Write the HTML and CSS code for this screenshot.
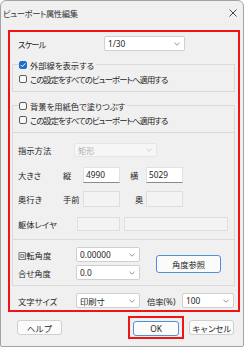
FILE: index.html
```
<!DOCTYPE html>
<html lang="ja">
<head>
    <meta charset="UTF-8">
    <title>ビューポート属性編集</title>
    <link rel="stylesheet" href="styles.css">
</head>
<body>
    <div class="window">
        <div class="titlebar">
            <span class="title">ビューポート属性編集</span>
            <svg class="close" width="8" height="8" viewBox="0 0 8 8"><path d="M0.5 0.5L7.5 7.5M7.5 0.5L0.5 7.5" stroke="#333" stroke-width="0.9"/></svg>
        </div>

        <div class="main">
            <div class="row scale-row">
                <span class="lbl w-scale tight">スケール</span>
                <div class="combo c-scale">1/30<svg class="chev" width="6" height="4" viewBox="0 0 6 4"><path d="M0.5 0.8L3 3.2L5.5 0.8" fill="none" stroke="#777" stroke-width="0.8"/></svg></div>
            </div>

            <div class="group">
                <div class="legend"><span class="box checked"><svg width="8" height="8" viewBox="0 0 8 8"><path d="M1.8 4.1L3.3 5.6L6.3 2.4" fill="none" stroke="#fff" stroke-width="1"/></svg></span>外部線を表示する</div>
                <div class="check tight"><span class="box"></span>この設定をすべてのビューポートへ適用する</div>
            </div>

            <div class="group">
                <div class="legend"><span class="box"></span>背景を用紙色で塗りつぶす</div>
                <div class="check tight"><span class="box"></span>この設定をすべてのビューポートへ適用する</div>
            </div>

            <div class="panel p-shape">
                <div class="row r-kind">
                    <span class="lbl w-kind">指示方法</span>
                    <div class="combo disabled c-kind">矩形<svg class="chev" width="6" height="4" viewBox="0 0 6 4"><path d="M0.5 0.8L3 3.2L5.5 0.8" fill="none" stroke="#c4c4c4" stroke-width="0.8"/></svg></div>
                </div>
                <div class="row r-size">
                    <span class="lbl w-main">大きさ</span>
                    <span class="lbl w-sub">縦</span>
                    <div class="edit">4990</div>
                    <span class="lbl w-sub2">横</span>
                    <div class="edit">5029</div>
                </div>
                <div class="row r-depth">
                    <span class="lbl w-main">奥行き</span>
                    <span class="lbl w-sub">手前</span>
                    <div class="edit off"></div>
                    <span class="lbl w-sub2 back">奥</span>
                    <div class="edit off"></div>
                </div>
                <div class="row r-layer">
                    <span class="lbl w-layer">躯体レイヤ</span>
                    <div class="edit off l1"></div>
                    <div class="edit off l2"></div>
                </div>
            </div>

            <div class="panel p-angle">
                <div class="angles">
                    <div class="row r-angle">
                        <span class="lbl w-angle">回転角度</span>
                        <div class="combo c-angle">0.00000<svg class="chev" width="6" height="4" viewBox="0 0 6 4"><path d="M0.5 0.8L3 3.2L5.5 0.8" fill="none" stroke="#777" stroke-width="0.8"/></svg></div>
                    </div>
                    <div class="row r-angle r-angle2">
                        <span class="lbl w-angle">合せ角度</span>
                        <div class="combo c-angle">0.0<svg class="chev" width="6" height="4" viewBox="0 0 6 4"><path d="M0.5 0.8L3 3.2L5.5 0.8" fill="none" stroke="#777" stroke-width="0.8"/></svg></div>
                    </div>
                </div>
                <button class="btn primary b-ref">角度参照</button>
            </div>

            <div class="row r-font">
                <span class="lbl w-angle">文字サイズ</span>
                <div class="combo c-angle">印刷寸<svg class="chev" width="6" height="4" viewBox="0 0 6 4"><path d="M0.5 0.8L3 3.2L5.5 0.8" fill="none" stroke="#777" stroke-width="0.8"/></svg></div>
                <span class="lbl w-rate">倍率(%)</span>
                <div class="combo c-rate">100<svg class="chev" width="6" height="4" viewBox="0 0 6 4"><path d="M0.5 0.8L3 3.2L5.5 0.8" fill="none" stroke="#777" stroke-width="0.8"/></svg></div>
            </div>
        </div>

        <div class="buttons">
            <button class="btn">ヘルプ</button>
            <div class="spacer"></div>
            <div class="ok-mark"><button class="btn primary">OK</button></div>
            <button class="btn tight-btn">キャンセル</button>
        </div>
    </div>
</body>
</html>
```

FILE: styles.css
```
* {
    box-sizing: border-box;
}
body {
    margin: 0;
    background: #fff;
    font-family: "Noto Sans", "Noto Sans CJK JP", sans-serif;
    font-size: 8.3px;
    font-feature-settings: "palt";
    color: #262626;
}
.window {
    width: 244px;
    height: 347px;
    background: #f0f0f0;
    border: 1px solid #a3a3a3;
    border-radius: 6px 6px 2px 2px;
    display: flex;
    flex-direction: column;
}
.titlebar {
    height: 29px;
    display: flex;
    align-items: center;
    justify-content: space-between;
    padding: 0 6px 5px 2px;
}
.title {
    color: #333;
    letter-spacing: -0.4px;
}
.close {
    display: block;
}

/* kana-heavy texts run narrower in the original UI font */
.tight {
    letter-spacing: -0.9px;
}

/* red annotated area */
.main {
    margin: 0 3px 0 7px;
    border: 2px solid #f01414;
    padding: 4px 0 2px;
}
.row {
    display: flex;
    align-items: center;
}
.lbl {
    flex: none;
    white-space: nowrap;
}
.scale-row {
    height: 15px;
    padding-left: 8px;
}
.w-scale { width: 86px; }
.c-scale { width: 81px; }

.combo {
    height: 100%;
    display: flex;
    align-items: center;
    justify-content: space-between;
    padding: 0 4px 0 3px;
    background: #fff;
    border: 1px solid #cfcfcf;
    border-radius: 2px;
    font-size: 8.3px;
}
.combo.disabled {
    background: #f6f6f6;
    border-color: #e6e6e6;
    color: #b0b0b0;
}
.chev {
    display: block;
}

/* checkbox groups */
.group {
    margin: 13px 3px 0 2px;
    border: 1px solid #dadada;
    padding: 0 6px 8px;
}
.legend, .check {
    display: flex;
    align-items: center;
    height: 9px;
    white-space: nowrap;
}
.legend {
    margin-top: -5px;
    width: max-content;
    background: #f0f0f0;
    padding-right: 2px;
}
.check {
    margin-top: 5px;
}
.box {
    flex: none;
    width: 8px;
    height: 8px;
    margin-right: 3px;
    border: 1px solid #5c5c5c;
    border-radius: 2px;
    background: #f9f9f9;
}
.box svg {
    display: block;
    margin: -1px;
}
.box.checked {
    background: #1d6ed0;
    border-color: #1d6ed0;
}

/* framed panels */
.panel {
    margin: -1px 3px 0 2px;
    border: 1px solid #dadada;
    padding: 10px 5px 8px;
}
.r-kind { height: 14px; }
.w-kind { width: 56px; }
.c-kind { width: 83px; }

.r-size { height: 16px; margin-top: 10px; }
.r-depth { height: 16px; margin-top: 8px; }
.w-main { width: 45px; }
.w-sub { width: 20px; }
.w-sub2 { width: 16px; margin-left: 10px; }
.back { padding-left: 5px; }

.edit {
    width: 37px;
    height: 100%;
    padding: 1px 2px 0;
    background: #fff;
    border: 1px solid #e2e2e2;
    border-bottom-color: #8a8a8a;
    font-size: 8.3px;
}
.edit.off {
    background: #f3f3f3;
    border-color: #dedede;
}
.r-layer { height: 14px; margin-top: 10px; }
.w-layer { width: 59px; }
.l1 { width: 43px; }
.l2 { width: 104px; margin-left: 4px; }

.p-angle {
    display: flex;
    align-items: center;
    padding: 7px 5px 5px;
}
.r-angle { height: 15px; }
.r-angle2 { margin-top: 3px; }
.w-angle { width: 58px; }
.c-angle { width: 64px; }

.btn {
    font-family: inherit;
    font-size: 8.3px;
    color: #262626;
    width: 45px;
    height: 15px;
    padding: 0;
    background: #fbfbfb;
    border: 1px solid #d0d0d0;
    border-radius: 3px;
}
.btn.primary {
    border-color: #4f8fdc;
}
.tight-btn {
    letter-spacing: -0.6px;
}
.b-ref {
    width: 65px;
    height: 18px;
    margin-left: 16px;
}

.r-font {
    height: 15px;
    margin-top: 7px;
    padding-left: 8px;
}
.w-rate { width: 35px; margin-left: 7px; }
.c-rate { width: 52px; }

/* bottom buttons */
.buttons {
    display: flex;
    align-items: center;
    padding: 4px 9px 0 16px;
}
.spacer {
    flex: 1;
}
.ok-mark {
    border: 2px solid #f01414;
    padding: 3px 3px 1px;
    margin-right: 5px;
}
.ok-mark .btn {
    display: block;
    width: 46px;
}
```
